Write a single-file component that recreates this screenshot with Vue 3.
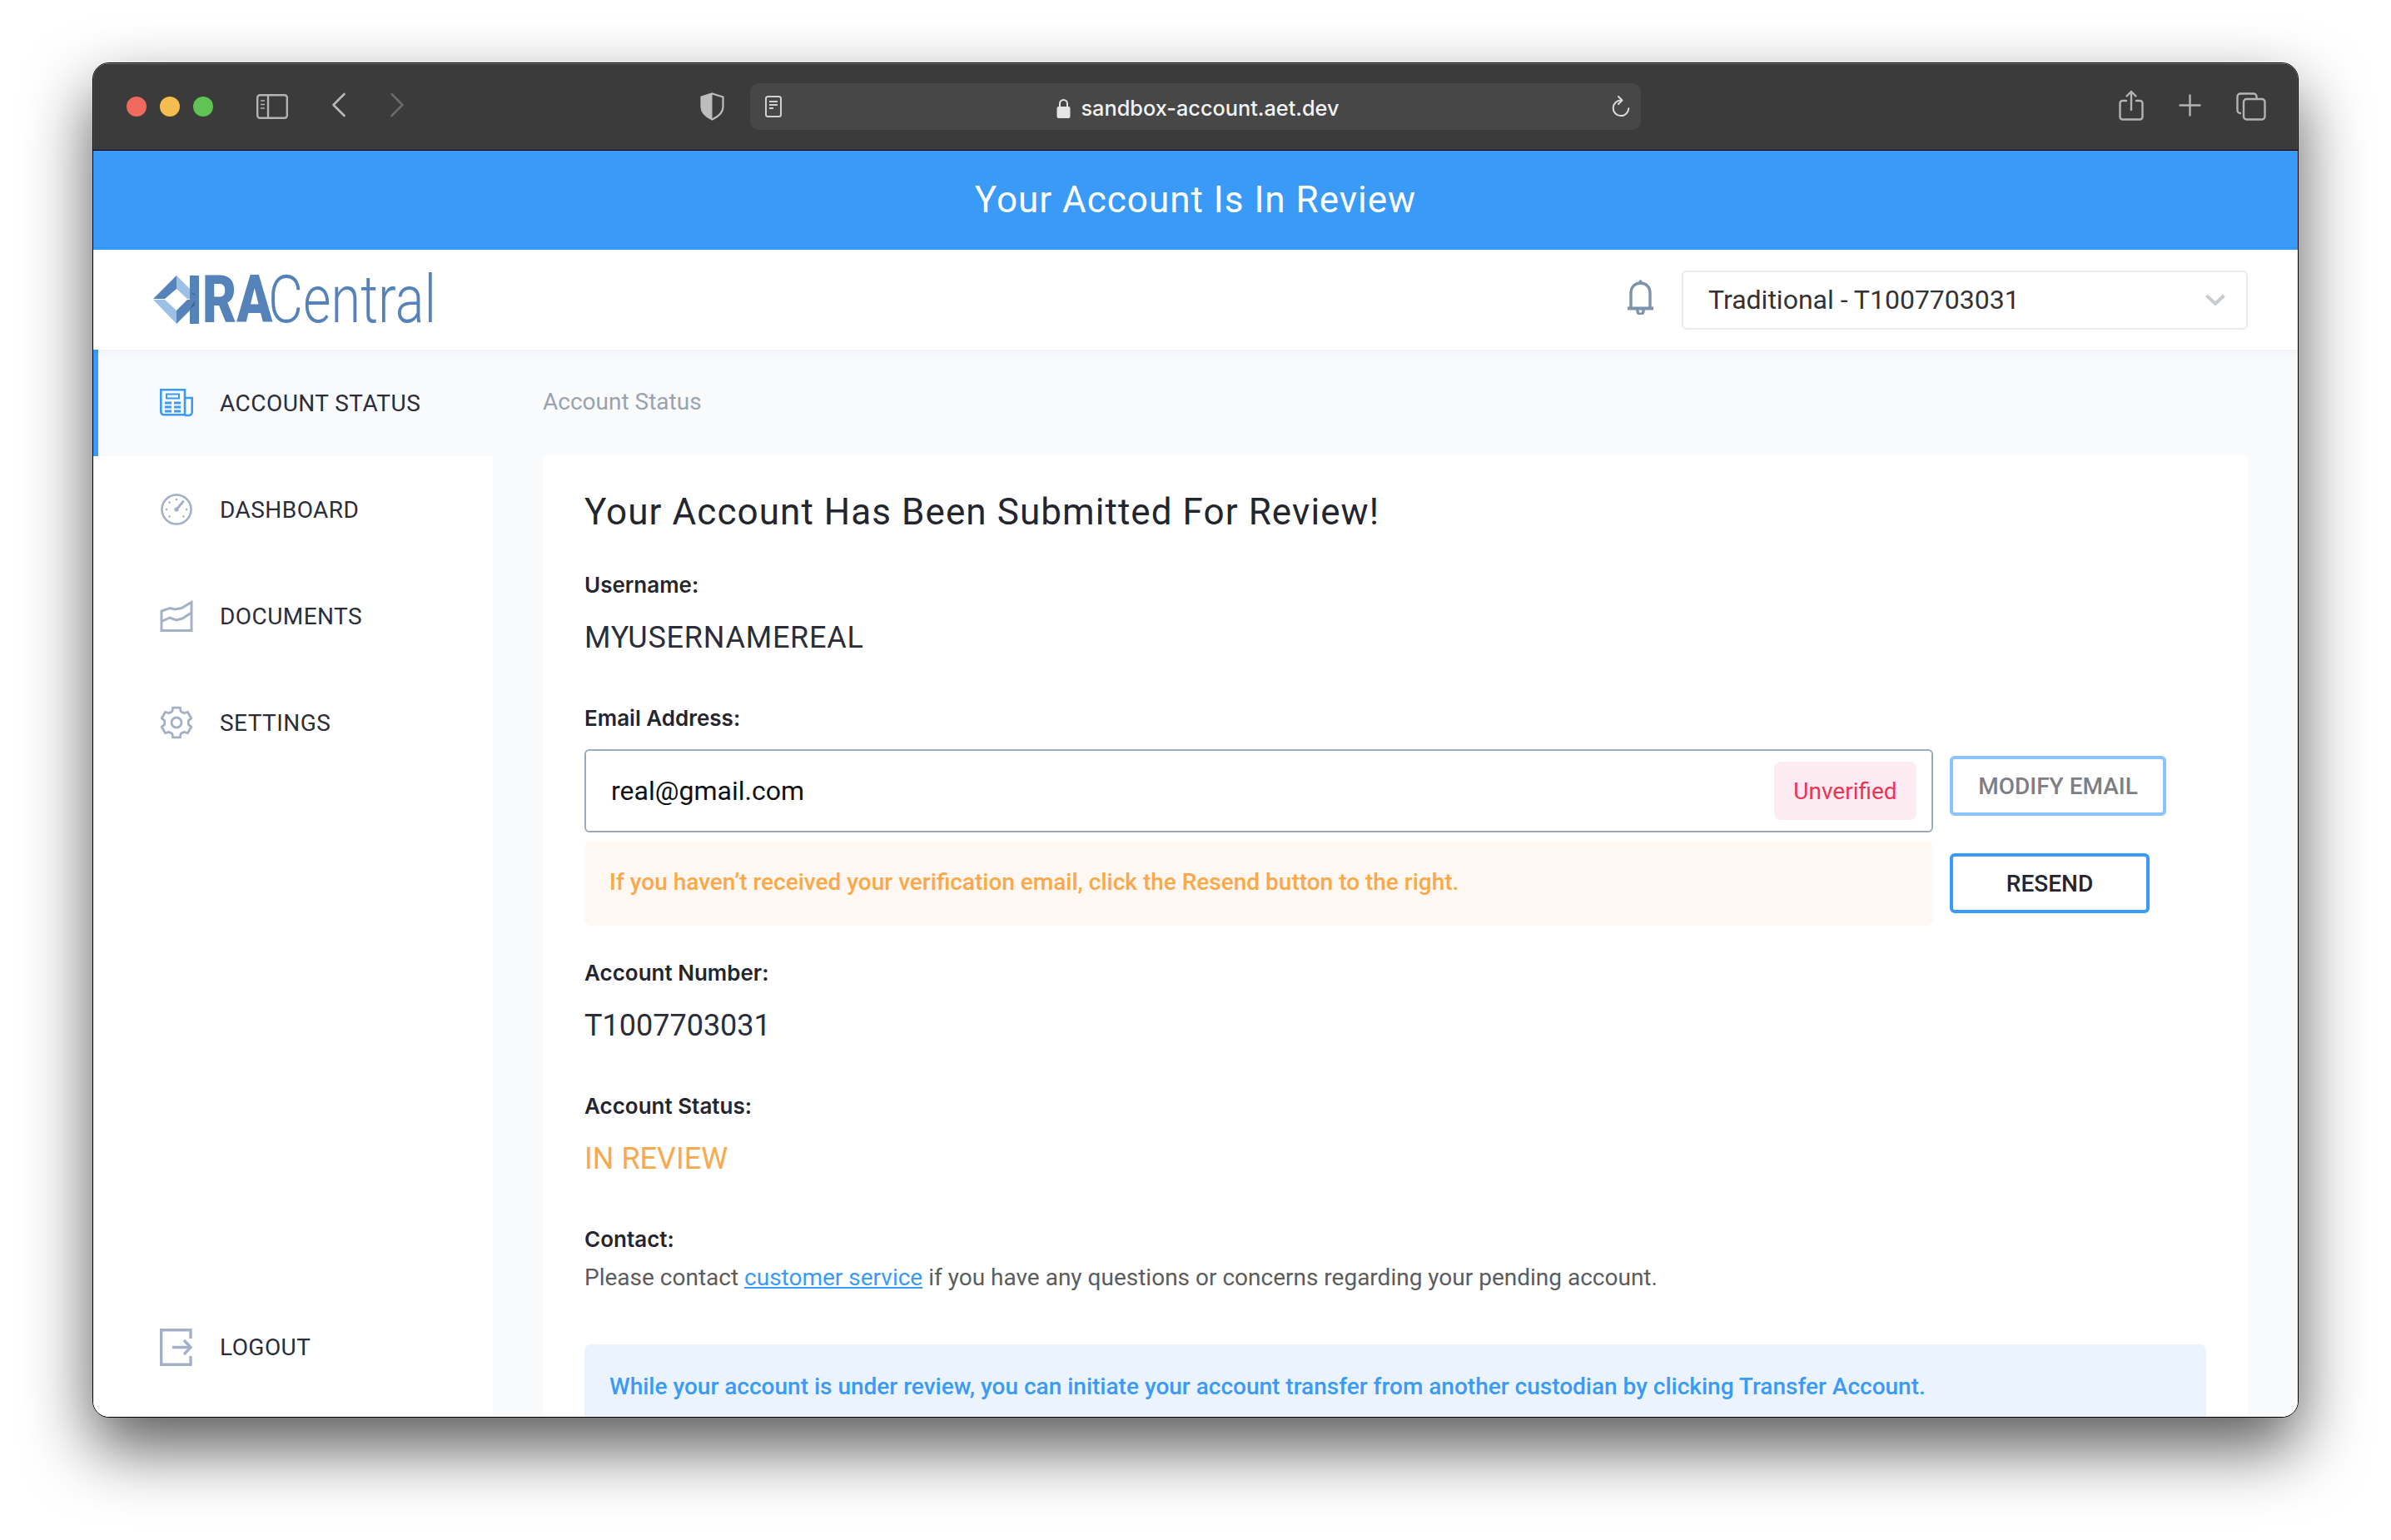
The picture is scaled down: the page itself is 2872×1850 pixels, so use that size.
<script setup>
const n = 6, ro = 18.5, ri = 14.5
let gearPts = []
for (let i = 0; i < n; i++) {
  const a = (i * 2 * Math.PI) / n - Math.PI / 2
  const w = 0.24, s = 0.3
  const p = (r, t) => `${(20 + r * Math.cos(t)).toFixed(2)} ${(20 + r * Math.sin(t)).toFixed(2)}`
  gearPts.push(p(ri, a - s - 0.06), p(ro, a - w), p(ro, a + w), p(ri, a + s + 0.06))
}
const gearPath = 'M' + gearPts.join('L') + 'Z'
</script>

<template>
  <div class="stage">
    <div class="window">
      <header class="titlebar">
        <span class="dot red"></span>
        <span class="dot amber"></span>
        <span class="dot green"></span>
        <svg class="ic-side" width="38" height="30" viewBox="0 0 38 30" fill="none" stroke="#b4b4b4" stroke-width="2.4">
          <rect x="1.2" y="1.2" width="35.6" height="27.6" rx="3" />
          <path d="M14 1v28" />
          <path d="M5 8h5M5 12.5h5M5 17h5" stroke-width="1.6" />
        </svg>
        <svg class="ic-back" width="18" height="30" viewBox="0 0 18 30" fill="none" stroke="#b8b8b8" stroke-width="2.6" stroke-linecap="round" stroke-linejoin="round">
          <path d="M15.5 2 2.5 15l13 13" />
        </svg>
        <svg class="ic-fwd" width="18" height="30" viewBox="0 0 18 30" fill="none" stroke="#6a6a6a" stroke-width="2.6" stroke-linecap="round" stroke-linejoin="round">
          <path d="M2.5 2 15.5 15l-13 13" />
        </svg>
        <svg class="ic-shield" width="29" height="34" viewBox="0 0 29 34" fill="none">
          <path d="M14.5 1.5 27.5 5.5v12c0 7-5.500 11.500-13 15-7.500-3.500-13-8-13-15v-12Z" stroke="#bdbdbd" stroke-width="2.2" />
          <path d="M14.5 1.500 1.500 5.500v12c0 7 5.500 11.500 13 15Z" fill="#bdbdbd" />
        </svg>
        <div class="urlbar">
          <svg class="ic-doc" width="20" height="26" viewBox="0 0 20 26" fill="none" stroke="#d0d0d0">
            <rect x="1" y="1" width="18" height="24" rx="2.500" stroke-width="2" />
            <path d="M5 7h10M5 11h10M5 15h5" stroke-width="2" />
          </svg>
          <div class="url">
            <svg width="17" height="24" viewBox="0 0 17 24">
              <path d="M4 11V6.500a4.500 4.500 0 0 1 9 0V11" fill="none" stroke="#e4e4e4" stroke-width="2" />
              <rect x="0.500" y="10" width="16" height="14" rx="2" fill="#e4e4e4" />
            </svg>
            <span>sandbox-account.aet.dev</span>
          </div>
          <svg class="ic-reload" width="22" height="26" viewBox="0 0 22 26" fill="none" stroke="#dcdcdc" stroke-width="2">
            <path d="M11 5.500a9.300 9.300 0 1 0 9.300 9.800" stroke-linecap="round" />
            <path d="M8 1l4.500 4.500L8 10" stroke-linecap="round" stroke-linejoin="round" />
          </svg>
        </div>
        <svg class="ic-share" width="30" height="37" viewBox="0 0 30 37" fill="none" stroke="#b4b4b4" stroke-width="2.400" stroke-linecap="round" stroke-linejoin="round">
          <path d="M9 13H4.500A3 3 0 0 0 1.500 16v16.500a3 3 0 0 0 3 3h21a3 3 0 0 0 3-3V16a3 3 0 0 0-3-3H21" />
          <path d="M15 24V2M9.500 7.500 15 2l5.500 5.500" />
        </svg>
        <svg class="ic-plus" width="27" height="27" viewBox="0 0 27 27" fill="none" stroke="#b4b4b4" stroke-width="2.400" stroke-linecap="round">
          <path d="M13.500 1.500v24M1.500 13.500h24" />
        </svg>
        <svg class="ic-tabs" width="36" height="34" viewBox="0 0 36 34" fill="none" stroke="#b4b4b4" stroke-width="2.400" stroke-linejoin="round">
          <path d="M6 25H5a3.500 3.500 0 0 1-3.500-3.500V5A3.500 3.500 0 0 1 5 1.500h16A3.500 3.500 0 0 1 24.500 5v2" />
          <rect x="9" y="8" width="25.500" height="24.500" rx="3.500" />
        </svg>
      </header>

      <div class="banner">Your Account Is In Review</div>

      <nav class="topnav">
        <div class="logo">
          <svg class="logo-mark" width="60" height="58" viewBox="0 0 60 58">
            <path d="M28 0v16L14 28H0Z" fill="#5482b9" />
            <path d="M28 0 50 22v6h-9L28 16Z" fill="#9cc0e6" />
            <path d="M0 29h14l14 13v16Z" fill="#9cc0e6" />
            <path d="M28 58V42l13-13h9v7Z" fill="#5482b9" />
            <path d="M44 22h6v7h-6Z" fill="#3f6595" />
            <path d="M44 0h11v58H44Z" fill="#5482b9" />
            <path d="M44 20l6 2v14l-6 4 6-10v-6Z" fill="#3f6595" />
          </svg>
          <span class="logo-ra">RA</span>
          <span class="logo-central">Central</span>
        </div>
        <div class="nav-right">
          <svg class="bell" width="33" height="42" viewBox="0 0 33 42" fill="none" stroke="#7d92ab" stroke-width="3.4">
            <path d="M5 34V16C5 8.500 10 4 16.500 4S28 8.500 28 16v18" />
            <path d="M1 34.500h31" stroke-width="4" />
            <path d="M16.500 0.500V4" />
            <path d="M13 36v2a3.500 3.500 0 0 0 7 0v-2" />
          </svg>
          <div class="select">
            <span>Traditional - T1007703031</span>
            <svg width="24" height="14" viewBox="0 0 24 14" fill="none" stroke="#c9ccd1" stroke-width="4">
              <path d="M1.500 2 12 12 22.500 2" />
            </svg>
          </div>
        </div>
      </nav>

      <div class="body">
        <aside class="sidebar">
          <a class="item active">
            <svg width="40" height="34" viewBox="0 0 40 34" fill="none" stroke="#3a9af8" stroke-width="2.600">
              <path d="M1.300 1.300h28.700v30H5a3.700 3.700 0 0 1-3.700-3.700Z" />
              <path d="M30 11h8.700v17a4 4 0 0 1-4 4H30" />
              <path d="M8 6.500h15v5H8Z" stroke-width="2" />
              <path d="M6 17h8M17 17h8M6 22h8M17 22h8M6 27h8M17 27h8" stroke-width="2.800" />
            </svg>
            <span>ACCOUNT STATUS</span>
          </a>
          <a class="item">
            <svg width="40" height="40" viewBox="0 0 40 40" fill="none" stroke="#a3b1c6" stroke-width="2.600">
              <circle cx="20" cy="20" r="17.500" />
              <path d="M20 20 28 10.500" stroke-width="2.800" stroke-linecap="round" />
              <circle cx="20" cy="20" r="2.600" fill="#a3b1c6" stroke="none" />
              <g fill="#a3b1c6" stroke="none">
                <circle cx="20" cy="8" r="1.300" />
                <circle cx="11.500" cy="11.500" r="1.300" />
                <circle cx="8" cy="20" r="1.300" />
                <circle cx="32" cy="20" r="1.300" />
                <circle cx="11.500" cy="28.500" r="1.300" />
                <circle cx="28.500" cy="28.500" r="1.300" />
              </g>
            </svg>
            <span>DASHBOARD</span>
          </a>
          <a class="item">
            <svg width="40" height="38" viewBox="0 0 40 38" fill="none" stroke="#a3b1c6" stroke-width="3">
              <path d="M2 36.500V13L12 9.500l6 1.500 8-1.500L38 2.500v34Z" />
              <path d="M2 25.500 12 21l8 3 7-2 11-7" />
            </svg>
            <span>DOCUMENTS</span>
          </a>
          <a class="item">
            <svg width="40" height="40" viewBox="0 0 40 40" fill="none" stroke="#a3b1c6" stroke-width="2.800" stroke-linejoin="round">
              <path :d="gearPath" />
              <circle cx="20" cy="20" r="6" />
            </svg>
            <span>SETTINGS</span>
          </a>
          <a class="item logout">
            <svg width="40" height="45" viewBox="0 0 40 45" fill="none" stroke="#a3b1c6" stroke-width="3.400">
              <path d="M37 12V1.700H1.700v41.600H37V33" />
              <path d="M15 22.500h21" />
              <path d="M29 14l8 8.500-8 8.500" />
            </svg>
            <span>LOGOUT</span>
          </a>
        </aside>

        <main class="main">
          <div class="crumb">Account Status</div>
          <section class="card">
            <h1>Your Account Has Been Submitted For Review!</h1>
            <div class="label first">Username:</div>
            <div class="value username">MYUSERNAMEREAL</div>
            <div class="label">Email Address:</div>
            <div class="email-grid">
              <div class="input">
                <span>real@gmail.com</span>
                <span class="badge">Unverified</span>
              </div>
              <button class="btn modify">MODIFY EMAIL</button>
              <div class="warn">If you haven’t received your verification email, click the Resend button to the right.</div>
              <button class="btn resend">RESEND</button>
            </div>
            <div class="label after-grid">Account Number:</div>
            <div class="value">T1007703031</div>
            <div class="label">Account Status:</div>
            <div class="value review">IN REVIEW</div>
            <div class="label">Contact:</div>
            <p class="contact">Please contact <a>customer service</a> if you have any questions or concerns regarding your pending account.</p>
            <div class="info">While your account is under review, you can initiate your account transfer from another custodian by clicking Transfer Account.</div>
          </section>
        </main>
      </div>
    </div>
  </div>
</template>

<style>
html, body { background: #fff; }
</style>

<style scoped>
.stage {
  width: 2872px;
  height: 1850px;
  padding: 75px 0 0 111px;
  box-sizing: border-box;
  overflow: hidden;
  background: #fff;
  font-family: Roboto, "Liberation Sans", sans-serif;
}
.window {
  width: 2650px;
  height: 1628px;
  box-sizing: border-box;
  border: 1px solid #000;
  border-radius: 20px;
  overflow: hidden;
  display: flex;
  flex-direction: column;
  background: #fff;
  box-shadow: 0 36px 80px rgba(0, 0, 0, 0.65);
}
.titlebar {
  height: 105px;
  flex: none;
  box-sizing: border-box;
  display: flex;
  align-items: center;
  padding-left: 40px;
  background: #3b3b3b;
  border-bottom: 1px solid #000;
  box-shadow: inset 0 1px 0 #7a7a7a, inset 1px 0 0 #555, inset -1px 0 0 #555;
}
.dot { width: 24px; height: 24px; border-radius: 50%; margin-right: 16px; flex: none; }
.red { background: #ee6a5f; }
.amber { background: #f5bd4f; }
.green { background: #5fc454; }
.titlebar svg { flex: none; }
.ic-side { margin-left: 36px; }
.ic-back { margin-left: 52px; margin-top: -4px; }
.ic-fwd { margin-left: 52px; margin-top: -4px; }
.ic-shield { margin-left: 355px; }
.urlbar {
  margin-left: 31px;
  width: 1070px;
  height: 56px;
  flex: none;
  box-sizing: border-box;
  display: flex;
  align-items: center;
  padding: 0 13px 0 18px;
  background: #474747;
  border-radius: 10px;
}
.url {
  flex: 1;
  display: flex;
  align-items: center;
  justify-content: center;
  gap: 12px;
  color: #f2f2f2;
  font-family: Inter, sans-serif;
  font-size: 25.3px;
  font-weight: 500;
  margin-left: 3px;
  padding-top: 3px;
}
.ic-share { margin-left: 574px; margin-top: -3px; }
.ic-plus { margin-left: 42px; margin-top: -3px; }
.ic-tabs { margin-left: 42px; }

.banner {
  height: 119px;
  flex: none;
  display: flex;
  align-items: center;
  justify-content: center;
  padding-bottom: 2px;
  box-sizing: border-box;
  background: #3a9af8;
  color: #fff;
  font-size: 44px;
  letter-spacing: 1px;
}

.topnav {
  position: relative;
  z-index: 2;
  height: 120px;
  flex: none;
  box-sizing: border-box;
  display: flex;
  align-items: center;
  justify-content: space-between;
  padding: 0 60px 0 72px;
  background: #fff;
  box-shadow: 0 2px 10px rgba(20, 40, 70, 0.06);
}
.logo { display: flex; align-items: center; width: 340px; height: 60px; color: #5482b9; }
.logo-mark { flex: none; }
.logo-ra {
  flex: none;
  width: 84px;
  font-size: 80px;
  line-height: 60px;
  font-weight: 900;
  transform: scaleX(0.79);
  transform-origin: left center;
  margin-left: -1px;
}
.logo-central {
  flex: none;
  width: 197px;
  font-size: 80px;
  line-height: 60px;
  font-weight: 300;
  transform: scaleX(0.81);
  transform-origin: left center;
  margin-left: -5px;
}
.nav-right { display: flex; align-items: center; gap: 33px; }
.bell { margin-bottom: 6px; }
.select {
  width: 680px;
  height: 71px;
  box-sizing: border-box;
  display: flex;
  align-items: center;
  justify-content: space-between;
  padding: 0 25px 0 30px;
  border: 2px solid #e8ebef;
  border-radius: 6px;
  color: #333;
  font-size: 32px;
}

.body { flex: 1; display: flex; min-height: 0; }
.sidebar {
  width: 480px;
  flex: none;
  display: flex;
  flex-direction: column;
  background: #fff;
}
.item {
  height: 128px;
  flex: none;
  box-sizing: border-box;
  display: flex;
  align-items: center;
  gap: 32px;
  padding-left: 80px;
  color: #2b2d3b;
  font-size: 28px;
  letter-spacing: 0.45px;
}
.item svg { flex: none; }
.item.active { background: #f9fafc; border-left: 6px solid #3a9af8; padding-left: 74px; }
.logout { margin-top: auto; margin-bottom: 20px; }

.main { flex: 1; min-width: 0; background: #f9fafc; padding: 0 60px; display: flex; flex-direction: column; }
.crumb {
  height: 126px;
  flex: none;
  display: flex;
  align-items: center;
  padding-bottom: 1px;
  box-sizing: border-box;
  color: #9aa3ad;
  font-size: 28px;
}
.card {
  flex: 1;
  min-height: 0;
  box-sizing: border-box;
  padding: 39px 50px 0;
  background: #fff;
  border-radius: 6px;
  overflow: hidden;
}
h1 {
  margin: 0;
  font-size: 44px;
  line-height: 60px;
  font-weight: 400;
  color: #23262f;
  letter-spacing: 1.07px;
}
.label {
  margin-top: 59px;
  font-family: Inter, Roboto, sans-serif;
  font-size: 26px;
  line-height: 32px;
  font-weight: 600;
  color: #23262f;
}
.label.first { margin-top: 42px; }
.label.after-grid { margin-top: 41px; }
.value {
  margin-top: 25px;
  font-size: 36px;
  line-height: 44px;
  color: #2b2d3b;
}
.username { letter-spacing: 0.75px; }
.review { color: #f9a94b; }
.email-grid {
  margin-top: 21px;
  display: grid;
  grid-template-columns: 1620px auto;
  grid-template-rows: 100px 102px;
  row-gap: 10px;
  column-gap: 20px;
  justify-items: start;
}
.input {
  width: 100%;
  box-sizing: border-box;
  display: flex;
  align-items: center;
  justify-content: space-between;
  padding: 0 18px 0 30px;
  border: 2px solid #9aa9bd;
  border-radius: 6px;
  color: #111;
  font-size: 32px;
}
.badge {
  width: 171px;
  height: 70px;
  display: flex;
  align-items: center;
  justify-content: center;
  background: #fcebf0;
  border-radius: 8px;
  color: #ee3353;
  font-size: 28px;
}
.btn {
  box-sizing: border-box;
  height: 72px;
  padding: 0;
  background: #fff;
  border-radius: 6px;
  font-family: Roboto, sans-serif;
  font-size: 28px;
  font-weight: 500;
}
.modify { width: 260px; margin-top: 8px; border: 4px solid #8ac4fd; color: #7e7f86; }
.resend { width: 240px; align-self: center; border: 4px solid #3a9af8; color: #23262f; }
.warn {
  width: 100%;
  box-sizing: border-box;
  display: flex;
  align-items: center;
  padding: 0 30px 3px;
  background: #fff7f1;
  border-radius: 8px;
  color: #f9a94b;
  font-size: 28px;
  font-weight: 500;
}
.contact {
  margin: 10px 0 0;
  font-size: 28px;
  line-height: 40px;
  color: #5c5c5c;
}
.contact a { color: #3a9af8; text-decoration: underline; }
.info {
  margin-top: 60px;
  height: 140px;
  box-sizing: border-box;
  padding: 31px 30px 0;
  background: #ebf4fe;
  border-radius: 8px;
  color: #3a9af8;
  font-size: 28px;
  line-height: 40px;
  font-weight: 500;
}
</style>
